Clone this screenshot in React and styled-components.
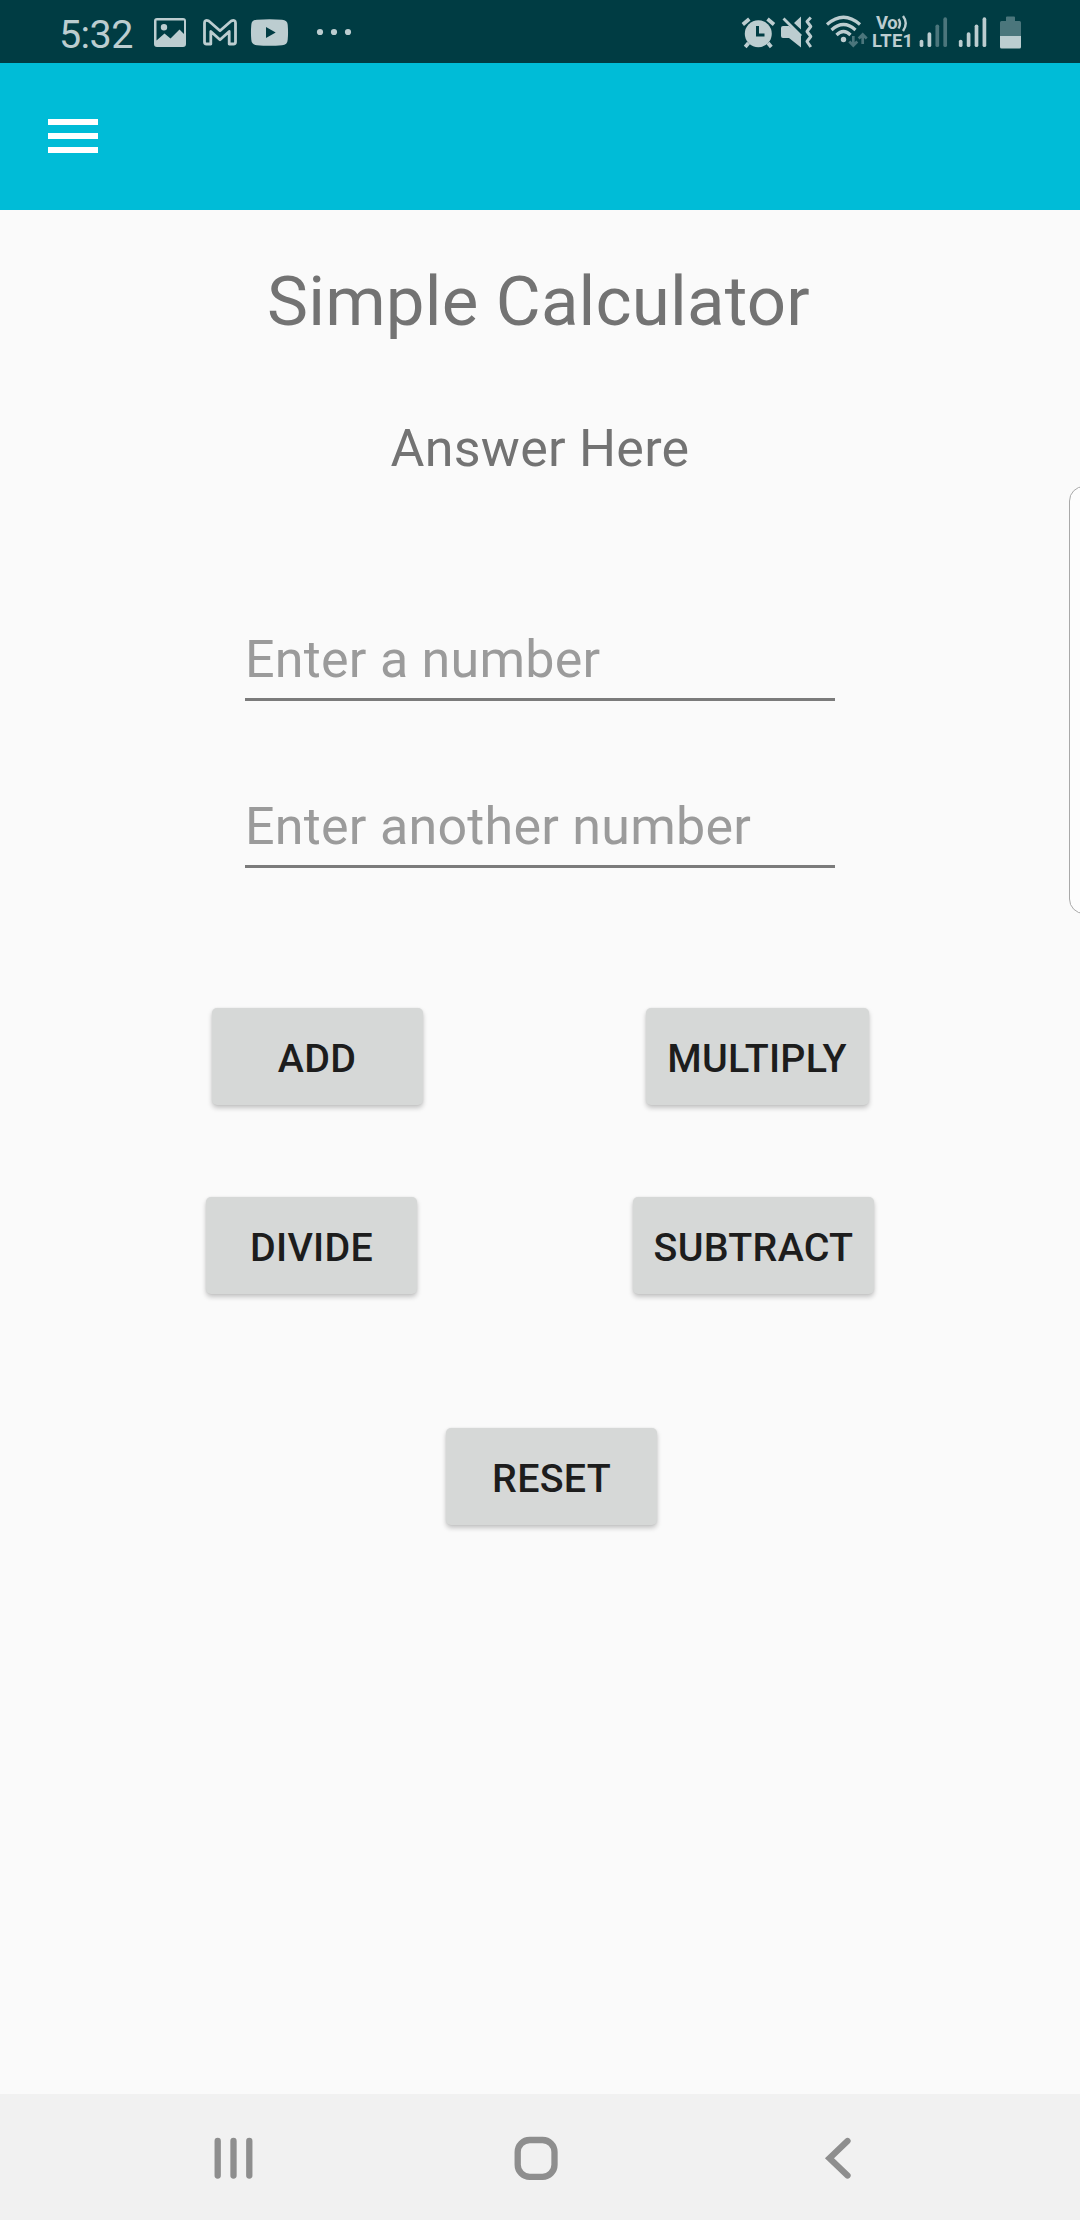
import React from "react";
import styled, { createGlobalStyle } from "styled-components";

const ink = "#bccdd0";
const dim = "#4b767c";

const GlobalStyle = createGlobalStyle`
  * { box-sizing: border-box; }
  body { margin: 0; background: #fafafa; font-family: Roboto, "Noto Sans", sans-serif; }
`;

const Screen = styled.div`
  position: relative;
  display: flex;
  flex-direction: column;
  width: 1080px;
  height: 2220px;
  overflow: hidden;
  background: #fafafa;
`;

const StatusBar = styled.header`
  display: flex;
  justify-content: space-between;
  height: 63px;
  padding: 0 59px;
  background: #003c43;
  color: ${ink};
`;

const StatusGroup = styled.div`
  display: flex;
`;

const Clock = styled.span`
  width: 95px;
  font-size: 39.5px;
  line-height: 70px;
  letter-spacing: -0.6px;
`;

const Glyph = styled.svg`
  display: block;
  flex: none;
  width: ${(p) => p.$w}px;
  height: 63px;
  fill: ${ink};
`;

const Network = styled.div`
  display: flex;
  flex-direction: column;
  width: 48px;
  padding: 14px 0 0 1px;
  font-size: 18.4px;
  font-weight: 700;
  line-height: 18px;
  letter-spacing: 0.3px;
`;

const NetworkTop = styled.div`
  display: flex;
  padding-left: 4px;
  letter-spacing: -0.3px;
`;

const Waves = styled.svg`
  width: 12px;
  height: 18px;
  fill: none;
  stroke: ${ink};
  stroke-width: 2.4;
`;

const AppBar = styled.nav`
  display: flex;
  align-items: flex-start;
  height: 147px;
  padding: 56px 48px 0;
  background: #00bcd7;
`;

const MenuButton = styled.button`
  display: flex;
  flex-direction: column;
  gap: 8px;
  width: 50px;
  padding: 0;
  border: 0;
  background: none;
`;

const MenuBar = styled.span`
  height: 6px;
  background: #fff;
`;

const Main = styled.main`
  display: flex;
  flex: 1;
  flex-direction: column;
  align-items: center;
`;

const Title = styled.h1`
  margin: 52px 0 0;
  padding-right: 3px;
  font-size: 69px;
  font-weight: 400;
  line-height: 80px;
  letter-spacing: 0.18px;
  color: #737373;
`;

const Answer = styled.p`
  margin: 77px 0 0;
  font-size: 52px;
  line-height: 60px;
  letter-spacing: 0.25px;
  color: #737373;
`;

const Fields = styled.div`
  display: flex;
  flex-direction: column;
  gap: 86px;
  width: 590px;
  margin-top: 141px;
`;

const Field = styled.label`
  height: 81px;
  border-bottom: 3px solid #7b7b7b;
  font-size: 52px;
  line-height: 80px;
  letter-spacing: 0.25px;
  color: #9b9b9b;
  white-space: nowrap;
`;

const Row = styled.div`
  display: flex;
  justify-content: space-between;
  width: ${(p) => p.$w}px;
  margin-top: ${(p) => p.$top}px;
  margin-left: ${(p) => p.$shift || 0}px;
`;

const Button = styled.button`
  width: ${(p) => p.$w || 211}px;
  height: 97px;
  padding: 4px 0 0;
  border: 0;
  border-radius: 5px;
  background: #d6d8d7;
  box-shadow: 0 3px 5px rgba(0, 0, 0, 0.22), 0 0 2px rgba(0, 0, 0, 0.08);
  font: 500 39.4px/46px Roboto, "Noto Sans", sans-serif;
  letter-spacing: 0.25px;
  color: #1d1d1d;
`;

const EdgePanel = styled.aside`
  position: absolute;
  top: 486px;
  left: 1069px;
  width: 30px;
  height: 428px;
  border: 1.5px solid #a9a9a9;
  border-radius: 16px;
  background: #fdfdfd;
`;

const NavBar = styled.footer`
  display: flex;
  align-items: center;
  justify-content: space-between;
  height: 126px;
  padding: 1px 228px 0 213px;
  background: #f1f1f1;
`;

const NavIcon = styled.svg`
  width: ${(p) => p.$w}px;
  height: 46px;
  fill: none;
  stroke: #8e8e8e;
  stroke-width: 6.3;
  stroke-linecap: round;
`;

const Signal = ({ x, weak }) => (
  <g strokeWidth="3.7" strokeLinecap="round">
    {[41.5, 34, 26.3, 19.2].map((top, i) => (
      <line key={top} x1={x + i * 7.9} x2={x + i * 7.9} y1={top} y2="45.2" stroke={weak && i > 1 ? dim : ink} />
    ))}
  </g>
);

export default function App() {
  return (
    <Screen>
      <GlobalStyle />
      <StatusBar>
        <StatusGroup>
          <Clock>5:32</Clock>
          <Glyph $w={41} viewBox="154 0 41 63">
            <path fillRule="evenodd" d="M157 18h26q3 0 3 3v23q0 3-3 3h-26q-3 0-3-3V21q0-3 3-3zM156.500 20.500V40.500l8-7 6 5 9-9 4.500 4.500V20.500zM164 24a3.200 3.200 0 1 1 0 6.400 3.200 3.200 0 0 1 0-6.400z" />
          </Glyph>
          <Glyph $w={50} viewBox="195 0 50 63">
            <path d="M204.500 23q0-3.500 4-2.200l11.500 10 11.500-10q4-1.300 4 2.200v19q0 2-2 2h-4.300V31.500l-9.200 8.200-9.200-8.200V44h-4.300q-2 0-2-2z" fill="none" stroke={ink} strokeWidth="2.8" strokeLinejoin="round" />
          </Glyph>
          <Glyph $w={110} viewBox="245 0 110 63">
            <path fillRule="evenodd" d="M257 19.700q12.500-1 25 0 5.500.3 5.700 5 .7 8 0 15-.2 5-5.700 5.500-12.500 1-25 0-5.500-.5-5.700-5.500-.7-7 0-15 .2-4.700 5.700-5zM266 27v11l9.700-5.500z" />
            <circle cx="320" cy="32" r="3.100" />
            <circle cx="334" cy="32" r="3.100" />
            <circle cx="348" cy="32" r="3.100" />
          </Glyph>
        </StatusGroup>
        <StatusGroup>
          <Glyph $w={39} viewBox="739 0 39 63">
            <path d="M742.800 24.500l6.500-5.500M767.500 19l6.500 5.500M748.500 43l-3.300 4M768 43l3.300 4" stroke={ink} strokeWidth="3.700" />
            <circle cx="758.300" cy="33.700" r="13.500" />
            <path d="M757.500 26v9h7" fill="none" stroke="#003c43" strokeWidth="3" />
          </Glyph>
          <Glyph $w={46} viewBox="778 0 46 63">
            <path d="M783 26h6l12 9v12.500L789 38h-6q-2 0-2-2v-8q0-2 2-2zM794 23l7-6.500v13z" />
            <path d="M783.500 18.500L801 36" stroke={ink} strokeWidth="2.800" />
            <path d="M810.800 17.500l-3.800 4 3.800 5-3.800 5 3.800 5-3.800 5 3.800 5.500" fill="none" stroke={ink} strokeWidth="3" strokeLinejoin="round" />
          </Glyph>
          <Glyph $w={47} viewBox="824 0 47 63">
            <g fill="none" stroke={ink} strokeWidth="3.200">
              <path d="M827 24.500Q843.500 10 860 24.500M831.500 30Q843.500 19 855.500 30M836.500 35Q843.500 28 850.500 35" />
            </g>
            <circle cx="843.500" cy="39.500" r="2.700" />
            <path d="M853.300 36v9.500M849.300 41.500l4 4 4-4M862.700 44v-9.500M858.700 38.500l4-4 4 4" fill="none" stroke={dim} strokeWidth="2.700" />
          </Glyph>
          <Network>
            <NetworkTop>
              Vo
              <Waves viewBox="0 0 12 18">
                <path d="M1.500 5q3 4.500 0 9.500M6 2q5.500 7 0 15" />
              </Waves>
            </NetworkTop>
            <span>LTE1</span>
          </Network>
          <Glyph $w={102} viewBox="919 0 102 63">
            <Signal x={921.5} weak />
            <Signal x={960.7} />
            <path d="M1006 17.500q0-1 1-1h7q1 0 1 1V21h4.500q1.500 0 1.500 1.500V36h-21V22.500q0-1.500 1.500-1.500h4.500z" fill={dim} />
            <path d="M1000 36h21v11q0 1.500-1.500 1.500h-18q-1.500 0-1.500-1.500z" />
          </Glyph>
        </StatusGroup>
      </StatusBar>
      <AppBar>
        <MenuButton aria-label="Menu">
          <MenuBar />
          <MenuBar />
          <MenuBar />
        </MenuButton>
      </AppBar>
      <Main>
        <Title>Simple Calculator</Title>
        <Answer>Answer Here</Answer>
        <Fields>
          <Field>Enter a number</Field>
          <Field>Enter another number</Field>
        </Fields>
        <Row $w={657} $top={140}>
          <Button>ADD</Button>
          <Button $w={223}>MULTIPLY</Button>
        </Row>
        <Row $w={668} $top={92}>
          <Button>DIVIDE</Button>
          <Button $w={241}>SUBTRACT</Button>
        </Row>
        <Row $w={211} $top={134} $shift={23}>
          <Button>RESET</Button>
        </Row>
      </Main>
      <NavBar>
        <NavIcon $w={42} viewBox="0 0 42 46">
          <path d="M4.700 6v34.500M20.500 6v34.500M36.300 6v34.500" />
        </NavIcon>
        <NavIcon $w={52} viewBox="0 0 52 46">
          <rect x="3.700" y="5" width="36.800" height="36.800" rx="12" />
        </NavIcon>
        <NavIcon $w={28} viewBox="0 0 28 46">
          <path d="M23.500 6L5.500 23.300l18 17.200" />
        </NavIcon>
      </NavBar>
      <EdgePanel />
    </Screen>
  );
}
